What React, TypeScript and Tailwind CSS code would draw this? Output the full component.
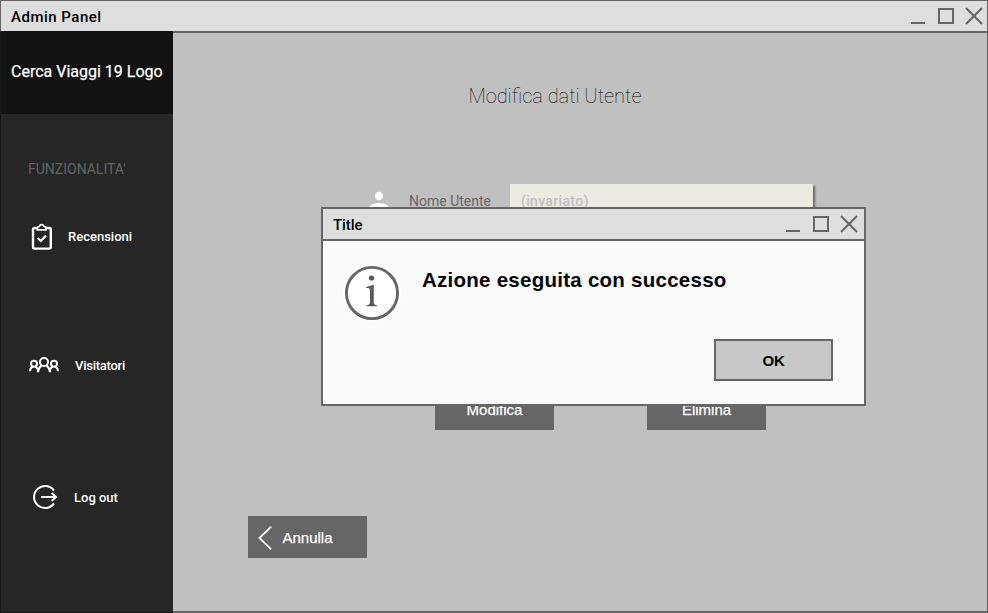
import React from "react";

function WindowControls() {
  return (
    <svg width="74" height="20" viewBox="0 0 74 20" fill="none" stroke="#666" strokeWidth="2">
      <path d="M1 17H15" />
      <rect x="29" y="3" width="14" height="14" />
      <path d="M56 2L72 18M72 2L56 18" />
    </svg>
  );
}

function ClipboardIcon() {
  return (
    <svg width="22" height="28" viewBox="0 0 22 28" fill="none" stroke="#fff" strokeWidth="2.4">
      <path d="M7 5H3.6Q2 5 2 6.6V24Q2 25.6 3.6 25.6H18.2Q19.8 25.6 19.8 24V6.6Q19.8 5 18.2 5H14.5" />
      <path d="M6.4 6.8V4.6Q6.4 3.8 8.3 3.5Q9 1.6 10.7 1.6Q12.4 1.6 13.1 3.5Q15 3.8 15 4.6V6.8Z" strokeWidth="1.7" />
      <path d="M6.6 15L9.8 18L15 12.4" strokeWidth="2.2" />
    </svg>
  );
}

function PeopleIcon() {
  return (
    <svg width="30" height="16" viewBox="0 0 30 16" fill="none" stroke="#fff" strokeWidth="2">
      <circle cx="15" cy="5" r="4.1" />
      <circle cx="5" cy="6.8" r="3" />
      <circle cx="25" cy="6.8" r="3" />
      <path d="M9 15.3Q9.2 11 12.5 8.6M21 15.3Q20.8 11 17.5 8.6M1 14.2Q1.2 10.8 3.7 9.6M6.4 9.6Q8.9 10.8 9.3 14.5M29 14.2Q28.8 10.8 26.3 9.6M23.6 9.6Q21.1 10.8 20.7 14.5" />
    </svg>
  );
}

function LogoutIcon() {
  return (
    <svg width="26" height="26" viewBox="0 0 26 26" fill="none" stroke="#fff" strokeWidth="2">
      <path d="M22 6.6A11 11 0 1 0 22 19.4" />
      <path d="M9 13H24M19.6 9L24 13L19.6 17" />
    </svg>
  );
}

function InfoIcon() {
  return (
    <svg width="58" height="58" viewBox="0 0 58 58">
      <circle cx="29" cy="29" r="29" fill="#fff" />
      <circle cx="29" cy="29" r="25.6" fill="none" stroke="#666" strokeWidth="2.9" />
      <circle cx="28.5" cy="14" r="2.6" fill="#555" />
      <path d="M23.2 23.1L30.8 20.8V38.5Q30.8 41 34 41.3V42.3H23.4V41.3Q27 41 27 38.5V25.5Q27 23.6 23.2 24.1Z" fill="#5a5a5a" />
    </svg>
  );
}

const actionButton =
  "flex h-[42px] w-[119px] items-center justify-center bg-[#666] pt-[2px] text-[15px] leading-[18px] text-white [-webkit-text-stroke:0.25px_#fff]";

export default function App() {
  return (
    <div className="relative flex h-[613px] w-[988px] flex-col overflow-hidden bg-[#c0c0c0] font-['Liberation_Sans',Arial,sans-serif]">
      <header className="flex h-[31px] shrink-0 items-center justify-between border-x border-t border-[#666] bg-[#dedede] pl-[10px] pr-[3px]">
        <h1 className="pt-[2px] font-['Roboto',sans-serif] text-[15px] font-medium leading-[18px] tracking-[0.5px] text-black">Admin Panel</h1>
        <div className="flex h-[20px]"><WindowControls /></div>
      </header>

      <div className="flex min-h-0 flex-1">
        <aside className="flex w-[173px] shrink-0 flex-col border-b border-l border-[#161616] bg-[#262626] font-['Roboto',sans-serif] text-white">
          <div className="flex h-[83px] shrink-0 items-center bg-[#121212] pb-[2px] pl-[10px]">
            <span className="whitespace-nowrap text-[16px] leading-[19px] [-webkit-text-stroke:0.25px_#fff]">Cerca Viaggi 19 Logo</span>
          </div>
          <p className="mt-[47px] pl-[27px] text-[14px] leading-[17px] text-[#626262]">FUNZIONALITA'</p>
          <nav className="flex flex-col text-[13px] font-medium leading-[16px]">
            <a className="mt-[45px] flex h-[28px] items-center pl-[30px]">
              <ClipboardIcon />
              <span className="ml-[15px]">Recensioni</span>
            </a>
            <a className="mt-[100px] flex h-[28px] items-center pl-[28px]">
              <PeopleIcon />
              <span className="ml-[16px] pt-[2px] tracking-[-0.25px]">Visitatori</span>
            </a>
            <a className="mt-[104px] flex h-[28px] items-center pl-[31px]">
              <LogoutIcon />
              <span className="ml-[16px] pt-[2px]">Log out</span>
            </a>
          </nav>
        </aside>

        <main className="flex flex-1 flex-col border-b-2 border-r border-t-2 border-[#666]">
          <h2 className="mt-[51px] pl-[295.5px] font-['Roboto',sans-serif] text-[20px] font-thin leading-[24px] text-black">Modifica dati Utente</h2>
          <div className="mt-[76px] flex h-[34px] items-center pl-[196px] font-['Roboto',sans-serif]">
            <svg width="20" height="20" viewBox="0 0 20 20" fill="#fff">
              <circle cx="10" cy="5" r="4.2" />
              <path d="M0 18Q0 12 10 12Q20 12 20 18V20H0Z" />
            </svg>
            <label className="ml-[20px] w-[100.5px] text-[14px] leading-[17px] text-[#666]">Nome Utente</label>
            <div className="flex h-[34px] w-[303.5px] items-center bg-[#edeae3] pl-[11.5px] text-[14px] font-medium leading-[17px] tracking-[0.33px] text-[#c0c0c0] shadow-[2px_2px_2px_#666]">(invariato)</div>
          </div>
          <div className="mt-[170px] flex pl-[262px]">
            <button className={actionButton}>Modifica</button>
            <button className={actionButton + " ml-[93px]"}>Elimina</button>
          </div>
          <button className="ml-[75px] mt-[86px] flex h-[42px] w-[119px] items-center bg-[#666] pl-[10px] pt-[2px] text-[15px] leading-[18px] text-white [-webkit-text-stroke:0.25px_#fff]">
            <svg width="15" height="26" viewBox="0 0 15 26" fill="none" stroke="#fff" strokeWidth="1.8"><path d="M13.2 1.7L1.5 13L13.2 24.3" /></svg>
            <span className="ml-[9.5px]">Annulla</span>
          </button>
        </main>
      </div>

      <section role="dialog" className="absolute left-[321px] top-[207px] flex h-[199px] w-[545px] flex-col border-2 border-[#666] bg-[#fafafa]">
        <header className="flex h-[32px] shrink-0 items-center justify-between border-b-2 border-[#666] bg-[#dedede] pl-[10px] pr-[5px]">
          <h3 className="pt-[2px] font-['Roboto',sans-serif] text-[15px] font-medium leading-[18px] tracking-[-0.1px] text-black">Title</h3>
          <div className="flex h-[20px]"><WindowControls /></div>
        </header>
        <div className="flex pl-[20px] pt-[23px]">
          <InfoIcon />
          <p className="ml-[21px] mt-[4px] whitespace-nowrap text-[20.5px] font-bold leading-[24px] tracking-[0.26px] text-black">Azione eseguita con successo</p>
        </div>
        <button className="ml-[391px] mt-[17px] h-[42px] w-[119px] border-2 border-[#666] bg-[#c8c8c8] pt-[1px] text-[15px] font-bold leading-[18px] tracking-[-0.2px] text-black">OK</button>
      </section>
    </div>
  );
}
